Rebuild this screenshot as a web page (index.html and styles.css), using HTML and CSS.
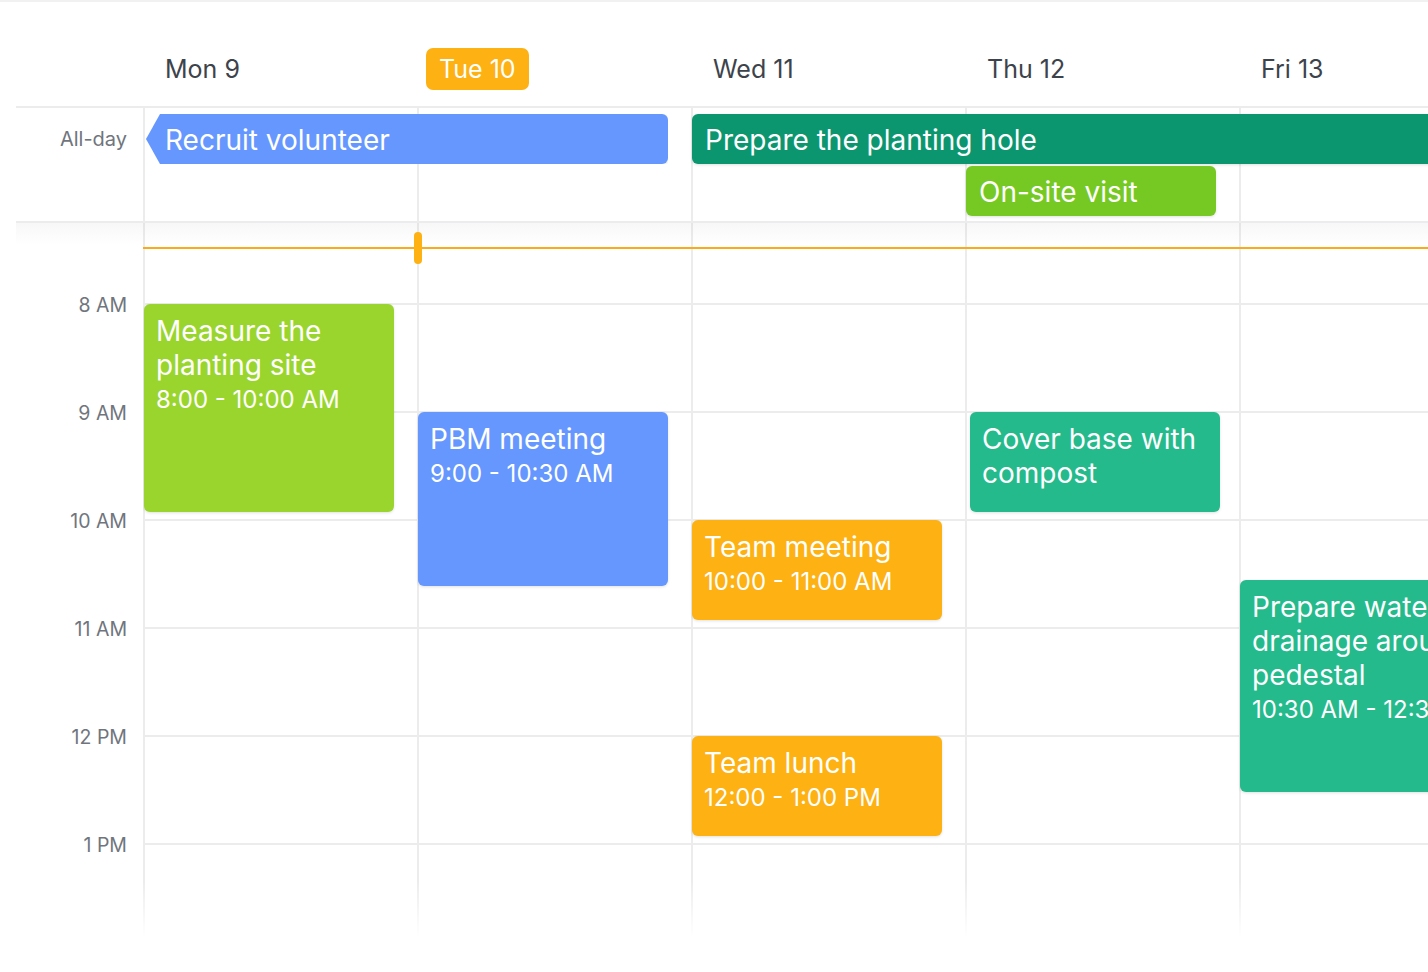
FILE: index.html
```html
<!DOCTYPE html>
<html lang="en">
<head>
<meta charset="utf-8">
<title>Week calendar</title>
<link rel="stylesheet" href="styles.css">
</head>
<body>
<div class="cal">
  <div class="row head">
    <div class="gutter"></div>
    <div class="dlabel"><span>Mon 9</span></div>
    <div class="dlabel today"><span>Tue 10</span></div>
    <div class="dlabel"><span>Wed 11</span></div>
    <div class="dlabel"><span>Thu 12</span></div>
    <div class="dlabel"><span>Fri 13</span></div>
  </div>

  <div class="row allday">
    <div class="gutter adlabel">All-day</div>
    <div class="adgrid">
      <div class="ad ad-recruit">Recruit volunteer</div>
      <div class="ad ad-hole">Prepare the planting hole</div>
      <div class="ad ad-visit">On-site visit</div>
    </div>
  </div>

  <div class="row body">
    <div class="gutter times">
      <div class="tspacer"></div>
      <div class="tlabel"><span>8 AM</span></div>
      <div class="tlabel"><span>9 AM</span></div>
      <div class="tlabel"><span>10 AM</span></div>
      <div class="tlabel"><span>11 AM</span></div>
      <div class="tlabel"><span>12 PM</span></div>
      <div class="tlabel"><span>1 PM</span></div>
    </div>
    <div class="cols">
      <div class="slots">
        <div class="slot-first"></div>
        <div class="slot"></div>
        <div class="slot"></div>
        <div class="slot"></div>
        <div class="slot"></div>
        <div class="slot"></div>
        <div class="slot"></div>
      </div>
      <div class="day d1">
        <div class="ev ev-lime" style="top:81px;height:208px">
          <div class="t">Measure the planting site</div>
          <div class="tm">8:00 - 10:00 AM</div>
        </div>
      </div>
      <div class="day d2">
        <div class="ev ev-blue" style="top:189px;height:174px">
          <div class="t">PBM meeting</div>
          <div class="tm">9:00 - 10:30 AM</div>
        </div>
      </div>
      <div class="day d3">
        <div class="ev ev-orange" style="top:297px;height:100px">
          <div class="t">Team meeting</div>
          <div class="tm">10:00 - 11:00 AM</div>
        </div>
        <div class="ev ev-orange" style="top:513px;height:100px">
          <div class="t">Team lunch</div>
          <div class="tm">12:00 - 1:00 PM</div>
        </div>
      </div>
      <div class="day d4">
        <div class="ev ev-teal ev-indent" style="top:189px;height:100px">
          <div class="t">Cover base with compost</div>
        </div>
      </div>
      <div class="day d5">
        <div class="ev ev-teal" style="top:357px;height:212px">
          <div class="t">Prepare water drainage around pedestal</div>
          <div class="tm">10:30 AM - 12:30 PM</div>
        </div>
      </div>
      <div class="now"><span class="pill"></span></div>
    </div>
  </div>
</div>
</body>
</html>
```

FILE: styles.css
```css
html, body {
  margin: 0;
  padding: 0;
  background: #ffffff;
}

body {
  font-family: Inter, "Noto Sans", "Liberation Sans", sans-serif;
  color: #3d434b;
}

.cal {
  width: 1428px;
  height: 972px;
  overflow: hidden;
  border-top: 2px solid #f1f1f1;
  box-sizing: border-box;
  background: #ffffff;
}

.row {
  display: flex;
  margin-left: 16px;
  width: 1497px;
}

.gutter {
  flex: 0 0 127px;
}

/* Header */
.head {
  height: 104px;
  align-items: flex-end;
  padding-bottom: 16px;
  box-sizing: border-box;
}

.dlabel {
  flex: 0 0 274px;
}

.dlabel span {
  display: inline-block;
  margin-left: 9px;
  padding: 1px 13px 0;
  font-size: 25px;
  line-height: 41px;
  border-radius: 7px;
  color: #3d434b;
}

.today span {
  background: #fdb113;
  color: #ffffff;
}

/* All-day */
.allday {
  height: 117px;
  border-top: 2px solid #ececec;
  border-bottom: 2px solid #ececec;
  box-sizing: border-box;
}

.adlabel {
  text-align: right;
  padding: 19px 16px 0 0;
  box-sizing: border-box;
  font-size: 20px;
  line-height: 24px;
  color: #70757d;
}

.adgrid {
  display: grid;
  grid-template-columns: repeat(5, 274px);
  grid-template-rows: 50px 50px;
  row-gap: 2px;
  align-content: start;
  padding-top: 6px;
  background: repeating-linear-gradient(to right, #ececec 0 2px, transparent 2px 274px);
}

.ad {
  color: #ffffff;
  font-size: 28px;
  line-height: 52px;
  padding-left: 13px;
  white-space: nowrap;
  overflow: hidden;
  border-radius: 6px;
  box-shadow: 0 1px 3px rgba(0, 0, 0, 0.12);
}

.ad-recruit {
  grid-column: 1 / span 2;
  grid-row: 1;
  margin: 0 23px 0 3px;
  padding-left: 19px;
  background: #6597fe;
  clip-path: polygon(14px 0, 100% 0, 100% 100%, 14px 100%, 0 50%);
}

.ad-hole {
  grid-column: 3 / span 3;
  grid-row: 1;
  margin-left: 1px;
  border-radius: 6px 0 0 6px;
  background: #0c9670;
}

.ad-visit {
  grid-column: 4;
  grid-row: 2;
  margin: 0 23px 0 1px;
  background: #76c922;
}

/* Time grid */
.body {
  height: 717px;
  position: relative;
}

.body::before {
  content: "";
  position: absolute;
  left: 0;
  right: 0;
  top: 0;
  height: 22px;
  background: linear-gradient(to bottom, rgba(30, 40, 70, 0.035), rgba(30, 40, 70, 0));
  z-index: 3;
  pointer-events: none;
}

.body::after {
  content: "";
  position: absolute;
  left: -16px;
  right: 0;
  bottom: 0;
  height: 60px;
  background: linear-gradient(to bottom, rgba(255, 255, 255, 0), #ffffff 95%);
  z-index: 5;
  pointer-events: none;
}

.times {
  display: flex;
  flex-direction: column;
}

.tspacer {
  height: 80px;
  flex: none;
}

.tlabel {
  height: 108px;
  flex: none;
  text-align: right;
  padding-right: 16px;
  box-sizing: border-box;
}

.tlabel span {
  display: block;
  margin-top: -10px;
  font-size: 19.5px;
  line-height: 24px;
  color: #70757d;
}

.cols {
  display: grid;
  grid-template-columns: repeat(5, 274px);
  grid-template-rows: 717px;
  position: relative;
  overflow: hidden;
}

.slots {
  grid-column: 1 / -1;
  grid-row: 1;
  display: flex;
  flex-direction: column;
}

.slot-first {
  height: 80px;
  flex: none;
}

.slot {
  height: 108px;
  flex: none;
  border-top: 2px solid #ececec;
  box-sizing: border-box;
}

.day {
  grid-row: 1;
  border-left: 2px solid #ececec;
  position: relative;
}

.d1 { grid-column: 1; }
.d2 { grid-column: 2; }
.d3 { grid-column: 3; }
.d4 { grid-column: 4; }
.d5 { grid-column: 5; }

.ev {
  position: absolute;
  left: -1px;
  right: 23px;
  padding: 10px 12px;
  box-sizing: border-box;
  border-radius: 6px;
  color: #ffffff;
  overflow: hidden;
  box-shadow: 0 1px 3px rgba(0, 0, 0, 0.12);
  z-index: 2;
}

.ev-indent {
  left: 3px;
  right: 19px;
}

.ev .t {
  font-size: 28px;
  line-height: 34px;
}

.ev .tm {
  font-size: 24px;
  line-height: 36px;
  white-space: nowrap;
}

.ev-lime { background: #9ad52e; }
.ev-blue { background: #6597fe; }
.ev-orange { background: #fdb113; }
.ev-teal { background: #24ba8c; }

.now {
  position: absolute;
  left: 0;
  right: 0;
  top: 24px;
  height: 2px;
  background: #f9ab1c;
  z-index: 4;
}

.pill {
  position: absolute;
  left: 271px;
  top: -15px;
  width: 8px;
  height: 32px;
  border-radius: 4px;
  background: #fdb113;
}
```
